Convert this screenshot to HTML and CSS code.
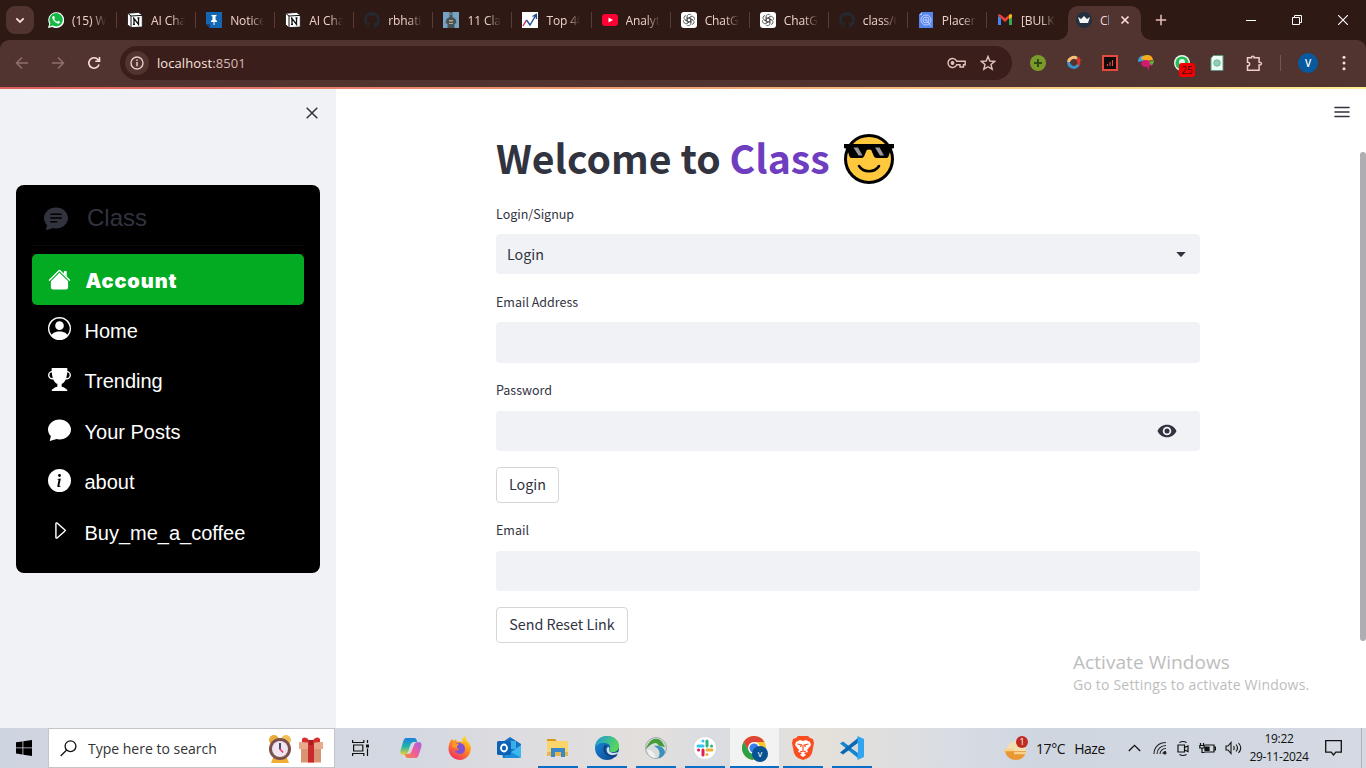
FILE: index.html
```html
<!DOCTYPE html>
<html lang="en">
<head>
<meta charset="utf-8">
<title>Class</title>
<link rel="stylesheet" href="styles.css">
</head>
<body>
<svg class="defs" width="0" height="0" aria-hidden="true">
  <defs>
    <symbol id="notion" viewBox="0 0 16 16"><path d="M.5 1.3 11.5.4l3.8 2.6v12l-11.500.6L.5 12.500z" fill="#fff" stroke="#111" stroke-width=".8"/><path d="M1 1.500 4 4l11-.6M4 4v11.300" fill="none" stroke="#111"/><path d="M7 12.300V6.500l4.500 5.800V6M6 6.500h1.500M6 12.400h2M10.500 6h2" fill="none" stroke="#111" stroke-width="1.300"/></symbol>
    <symbol id="github" viewBox="0 0 16 16"><path fill="#24292f" d="M8 0C3.580 0 0 3.580 0 8c0 3.540 2.290 6.530 5.470 7.590.4.070.55-.17.55-.38 0-.19-.01-.82-.01-1.490-2.010.37-2.530-.49-2.690-.94-.09-.23-.48-.94-.82-1.130-.28-.15-.68-.52-.01-.53.63-.01 1.080.58 1.230.82.72 1.210 1.870.87 2.330.66.07-.52.28-.87.51-1.070-1.780-.2-3.640-.89-3.640-3.950 0-.87.31-1.590.82-2.150-.08-.2-.36-1.020.08-2.120 0 0 .67-.21 2.200.82.64-.18 1.320-.27 2-.27s1.360.09 2 .27c1.530-1.040 2.200-.82 2.200-.82.44 1.100.16 1.920.08 2.120.51.56.82 1.270.82 2.150 0 3.070-1.870 3.750-3.650 3.950.29.25.54.73.54 1.480 0 1.070-.01 1.930-.01 2.200 0 .21.15.46.55.38A8.010 8.010 0 0 0 16 8c0-4.420-3.580-8-8-8z"/></symbol>
    <symbol id="gpt" viewBox="0 0 16 16"><rect width="16" height="16" rx="3" fill="#fff"/><g fill="none" stroke="#444" stroke-width=".75"><path id="petal" d="M6.200 9V4.600A2.300 2.300 0 0 1 10.400 3.300M6.200 6.800 9.900 4.700"/><use href="#petal" transform="rotate(60 8 8)"/><use href="#petal" transform="rotate(120 8 8)"/><use href="#petal" transform="rotate(180 8 8)"/><use href="#petal" transform="rotate(240 8 8)"/><use href="#petal" transform="rotate(300 8 8)"/></g></symbol>
    <linearGradient id="fox" x1=".8" y1="0" x2=".2" y2="1"><stop offset="0" stop-color="#ffe226"/><stop offset=".45" stop-color="#ff8a1e"/><stop offset="1" stop-color="#f0246e"/></linearGradient>
    <linearGradient id="cop1" x1="0" y1="0" x2="0" y2="1"><stop offset="0" stop-color="#1d7fe0"/><stop offset=".5" stop-color="#22b6a8"/><stop offset="1" stop-color="#f3d234"/></linearGradient>
    <linearGradient id="cop2" x1="1" y1="0" x2="0" y2="1"><stop offset="0" stop-color="#a464e8"/><stop offset=".5" stop-color="#ef5a9d"/><stop offset="1" stop-color="#f58a3c"/></linearGradient>
    <linearGradient id="edge1" x1="0" y1="0" x2="1" y2=".4"><stop offset="0" stop-color="#1899dd"/><stop offset="1" stop-color="#56d75b"/></linearGradient>
    <linearGradient id="edge2" x1="0" y1="0" x2="1" y2="1"><stop offset="0" stop-color="#188fe0"/><stop offset="1" stop-color="#0c3f86"/></linearGradient>
  </defs>
</svg>

<div class="screen">
  <header class="browser">
    <div class="tabstrip">
      <div class="tab-search"><svg width="28" height="28" viewBox="0 0 28 28"><path d="m10.300 12.300 3.700 3.700 3.700-3.700" fill="none" stroke="#fbdcd8" stroke-width="1.800"/></svg></div>
      <div class="tab"><svg width="16" height="16" viewBox="0 0 16 16"><path d="m0 16 1.200-4.200A8 7.900 0 1 1 4.200 14.900z" fill="#fff"/><path d="m1.500 14.500.9-3.200A6.700 6.700 0 1 1 4.800 13.600z" fill="#13b845"/><path d="M5.200 4c-2 1.200-.4 4 1.500 5.800 2 1.900 4.400 2.600 5.200.8.300-.9 0-1.100-1.700-1.900l-1 1C7.700 9 6.700 8 6.200 6.900l.7-.9-.8-1.900z" fill="#fff"/></svg><span>(15) Wh</span></div>
      <div class="tab"><svg width="16" height="16"><use href="#notion"/></svg><span>AI Chat</span></div>
      <div class="tab"><svg width="16" height="16" viewBox="0 0 16 16"><path d="M0 0h16v16H4l-4-4z" fill="#1467b3"/><path d="M0 12h4v4z" fill="#17407d"/><path d="M5.500 3h5v1l-1 .6v3L11 9v1H8.500v3h-1v-3H5V9l1.500-1.400v-3l-1-.6z" fill="#fff"/></svg><span>Notice</span></div>
      <div class="tab"><svg width="16" height="16"><use href="#notion"/></svg><span>AI Chat</span></div>
      <div class="tab"><svg width="16" height="16"><use href="#github"/></svg><span>rbhatia</span></div>
      <div class="tab"><svg width="16" height="16" viewBox="0 0 16 16"><path fill="#76a4c7" d="M0 0h16v16H0z"/><path d="M6.500 0h3v5l3 2 1 4-2 1v4h-7v-4l-2-1 1-4 3-2z" fill="#4a5353"/><path d="M7 1.500h2v1H7zM6 8h4v1.500H6zM6 11h4v1H6z" fill="#b0a798"/></svg><span>11 Clas</span></div>
      <div class="tab"><svg width="16" height="16" viewBox="0 0 16 16"><path fill="#fff" d="M0 0h16v16H0z"/><path d="m1 14 3.500-6" stroke="#c62846" stroke-width="1.400"/><path d="m4.500 8 3.500 5 6-10M10.500 4.500 14.300 2.500l.2 4.500" stroke="#234b98" stroke-width="1.400" fill="none"/></svg><span>Top 40</span></div>
      <div class="tab"><svg width="16" height="16" viewBox="0 0 16 16"><rect y="2" width="16" height="12" rx="3" fill="#ff0033"/><path d="m6.500 5.500 4.500 2.500-4.500 2.500z" fill="#fff"/></svg><span>Analyti</span></div>
      <div class="tab"><svg width="16" height="16"><use href="#gpt"/></svg><span>ChatG</span></div>
      <div class="tab"><svg width="16" height="16"><use href="#gpt"/></svg><span>ChatG</span></div>
      <div class="tab"><svg width="16" height="16"><use href="#github"/></svg><span>class/C</span></div>
      <div class="tab"><svg width="16" height="16" viewBox="0 0 16 16"><path d="M4 0h11v16H1V3z" fill="#5685f0"/><path d="m1 3 3-3v3z" fill="#a9c3fb"/><g fill="none" stroke="#c8d7fd" stroke-width=".9"><circle cx="8" cy="8" r="5"/><circle cx="8" cy="8" r="3"/><circle cx="8" cy="8" r="1"/><path d="m9 9 4 5"/></g></svg><span>Placem</span></div>
      <div class="tab tab-before-active"><svg width="16" height="16" viewBox="0 0 16 16"><path d="M1 13V4l3 2v7z" fill="#4285f4"/><path d="M12 13V6l3-2v9z" fill="#34a853"/><path d="M1 3.500C1 2 3 2 4 3l4 3.200L12 3c1-1 3-1 3 .5L8 10z" fill="#ea4335"/><path d="M12 3c1-1 3-1 3 .8V5l-3 2.300z" fill="#fbbc04"/></svg><span>[BULK]</span></div>
      <div class="tab-active"><svg width="16" height="16" viewBox="0 0 16 16"><circle cx="8" cy="8" r="8" fill="#262f3d"/><path d="m2 5 3 2 3-3 3 3 3-2-2 6H4z" fill="#f3f5f5"/></svg><span>Cl</span><svg class="tab-close" width="10" height="10" viewBox="0 0 10 10"><path d="m1.500 1.500 7 7m0-7-7 7" stroke="#fbdcd8" stroke-width="1.700"/></svg></div>
      <svg class="new-tab" width="12" height="12" viewBox="0 0 12 12"><path d="M6 .8v10.400M.8 6h10.400" stroke="#e9bfba" stroke-width="1.500"/></svg>
      <div class="window-controls">
        <svg width="10" height="10" viewBox="0 0 10 10"><path d="M0 5.500h10" stroke="#fff"/></svg>
        <svg width="10" height="10" viewBox="0 0 10 10" fill="none" stroke="#fff"><path d="M.5 2.500h7v7h-7zM2.500 2.500v-2h7v7h-2"/></svg>
        <svg width="10" height="10" viewBox="0 0 10 10"><path d="m0 0 10 10M10 0 0 10" stroke="#fff" stroke-width="1.100"/></svg>
      </div>
    </div>
    <div class="toolbar">
      <div class="nav-buttons">
        <svg width="14" height="14" viewBox="0 0 14 14" fill="none" stroke="#8f706d" stroke-width="1.500"><path d="M13 7H1.500M7 1.500 1.500 7 7 12.500"/></svg>
        <svg width="14" height="14" viewBox="0 0 14 14" fill="none" stroke="#8f706d" stroke-width="1.500"><path d="M1 7h11.500M7 1.500 12.500 7 7 12.500"/></svg>
        <svg width="14" height="14" viewBox="0 0 14 14" fill="none" stroke="#fbdcd8" stroke-width="1.600"><path d="M12 8.500A5.200 5.200 0 1 1 11 3.600L12.300 5M12.500 1v4.300H8.300"/></svg>
      </div>
      <div class="address">
        <div class="site-info"><svg width="14" height="14" viewBox="0 0 14 14"><circle cx="7" cy="7" r="6" fill="none" stroke="#e9cbc7" stroke-width="1.400"/><path d="M7 6v4.200M7 3.600v1.500" stroke="#e9cbc7" stroke-width="1.500"/></svg></div>
        <span class="url">localhost<i>:8501</i></span>
        <svg class="key" width="19" height="12" viewBox="0 0 19 12" fill="none" stroke="#e3c2be" stroke-width="1.400"><path d="M9.700 4.300A4.500 4.500 0 1 0 9.700 7.700H13V10h3.500V7.700h1.700V4.300z"/><circle cx="5.500" cy="6" r="1.200" fill="#e3c2be"/></svg>
        <svg class="star" width="16" height="16" viewBox="0 0 16 16"><path d="m8 1.500 1.800 4.500 4.900.4-3.700 3.100 1.200 4.700L8 11.700l-4.200 2.500L5 9.500 1.300 6.400 6.200 6z" fill="none" stroke="#e3c2be" stroke-width="1.400"/></svg>
      </div>
      <div class="extensions">
        <svg width="16" height="16" viewBox="0 0 16 16"><circle cx="8" cy="8" r="8" fill="#7a9b29"/><path d="M8 4v8M4 8h8" stroke="#2f4a15" stroke-width="2"/></svg>
        <svg width="16" height="16" viewBox="0 0 16 16" fill="none" stroke-width="3"><path d="M2.500 7A5.300 5.300 0 0 1 11 3.500" stroke="#f6c177"/><path d="M11 3.500A5.300 5.300 0 0 1 12 10.500" stroke="#d9392b"/><path d="M12.200 10A5.300 5.300 0 0 1 2.500 7" stroke="#3c92c6"/><path d="M13.500 2.500v3M15 4v2" stroke="#d9392b" stroke-width=".8"/></svg>
        <svg width="16" height="16" viewBox="0 0 16 16"><path d="M0 0h16v16H0z" fill="#e64a3c"/><path d="M2 2h12v12H2z" fill="#110b0b"/><path d="M5.500 11V9M8 11V7m2.500 4V5" stroke="#e64a3c" stroke-width="1.100"/></svg>
        <svg width="16" height="17" viewBox="0 0 16 17"><path d="M0 7c0-5 3-7 6-6 2 .3 2 4-1 5z" fill="#3f9fdb"/><path d="M3 4C4 0 8 0 10 0c3 0 5 3 5 5L9 6z" fill="#f7ab1c"/><path d="M3 7.500c2-2 5-3 7-2l5 2c0 2-2 4-4 3.500V16l-2-4c-4 0-6-1.500-6-4.500z" fill="#d1196f"/><path d="m11 7 5-2c0 3-1 5-3 5z" fill="#5dae3d"/></svg>
        <div class="badged"><svg width="16" height="16" viewBox="0 0 16 16"><circle cx="8" cy="8" r="8" fill="#edf9ee"/><circle cx="8" cy="8" r="6.600" fill="#25bd58"/><circle cx="8" cy="7" r="3" fill="#eaf6ea"/></svg><b>25</b></div>
        <svg width="14" height="16" viewBox="0 0 14 16"><path d="M3.500.5h9.500v15H1V3z" fill="#e9fff4" stroke="#5e9680"/><circle cx="7" cy="8" r="3.300" fill="#91cdb7" stroke="#5fa58d" stroke-width=".7"/></svg>
        <svg class="puzzle" width="17" height="17" viewBox="0 0 17 17"><path d="M1.500 2.700h4c-.4-2 3-2 2.600 0h5v4.500c3-.5 3 3.300 0 2.800v5.300H1.500v-4.500c2.900 0 2.900-3.600 0-3.600z" fill="none" stroke="#f0cdc8" stroke-width="1.500"/></svg>
        <span class="divider"></span>
        <span class="avatar">V</span>
        <svg class="more" width="4" height="16" viewBox="0 0 4 16" fill="#fbdcd8"><circle cx="2" cy="2.200" r="1.500"/><circle cx="2" cy="8" r="1.500"/><circle cx="2" cy="13.800" r="1.500"/></svg>
      </div>
    </div>
  </header>

  <div class="app">
    <aside class="sidebar">
      <svg class="sidebar-close" width="12" height="12" viewBox="0 0 12 12"><path d="m.7.700 10.600 10.600M11.300.700.7 11.300" stroke="#31333f" stroke-width="1.500"/></svg>
      <nav class="menu">
        <div class="menu-title"><svg width="24" height="24" viewBox="0 0 16 16"><path d="M16 8c0 3.866-3.582 7-8 7a9.060 9.060 0 0 1-2.347-.306c-.584.296-1.925.864-4.181 1.234-.2.032-.352-.176-.273-.362.354-.836.674-1.950.770-2.966C.744 11.370 0 9.760 0 8c0-3.866 3.582-7 8-7s8 3.134 8 7zM4.500 5a.5.5 0 0 0 0 1h7a.5.5 0 0 0 0-1h-7zm0 2.500a.5.5 0 0 0 0 1h7a.5.5 0 0 0 0-1h-7zm0 2.500a.5.5 0 0 0 0 1h4a.5.5 0 0 0 0-1h-4z"/></svg><span>Class</span></div>
        <a class="item selected"><svg viewBox="0 0 16 16"><path d="m8 3.293 6 6V13.500a1.500 1.500 0 0 1-1.500 1.500h-9A1.500 1.500 0 0 1 2 13.500V9.293l6-6zm5-.793V6l-2-2V2.500a.5.5 0 0 1 .5-.5h1a.5.5 0 0 1 .5.5z"/><path d="M7.293 1.500a1 1 0 0 1 1.414 0l6.647 6.646a.5.5 0 0 1-.708.708L8 2.207 1.354 8.854a.5.5 0 1 1-.708-.708L7.293 1.500z"/></svg><span>Account</span></a>
        <a class="item"><svg viewBox="0 0 16 16"><path d="M11 6a3 3 0 1 1-6 0 3 3 0 0 1 6 0z"/><path fill-rule="evenodd" d="M0 8a8 8 0 1 1 16 0A8 8 0 0 1 0 8zm8-7a7 7 0 0 0-5.468 11.370C3.242 11.226 4.805 10 8 10s4.757 1.225 5.468 2.370A7 7 0 0 0 8 1z"/></svg><span>Home</span></a>
        <a class="item"><svg viewBox="0 0 16 16"><path d="M2.500.5A.5.5 0 0 1 3 0h10a.5.5 0 0 1 .5.5c0 .538-.012 1.050-.034 1.536a3 3 0 1 1-1.133 5.890c-.79 1.865-1.878 2.777-2.833 3.011v2.173l1.425.356c.194.048.377.135.537.255L13.300 15.100a.5.5 0 0 1-.3.900H3a.5.5 0 0 1-.3-.9l1.838-1.379c.16-.12.343-.207.537-.255L6.500 13.110v-2.173c-.955-.234-2.043-1.146-2.833-3.012a3 3 0 1 1-1.132-5.890A33.076 33.076 0 0 1 2.500.5zm.099 2.540a2 2 0 0 0 .72 3.935c-.333-1.050-.588-2.346-.72-3.935zm10.083 3.935a2 2 0 0 0 .72-3.935c-.133 1.590-.388 2.885-.72 3.935z"/></svg><span>Trending</span></a>
        <a class="item"><svg viewBox="0 0 16 16"><path d="M8 15c4.418 0 8-3.134 8-7s-3.582-7-8-7-8 3.134-8 7c0 1.760.743 3.370 1.970 4.600-.097 1.016-.417 2.130-.771 2.966-.079.186.074.394.273.362 2.256-.37 3.597-.938 4.180-1.234A9.060 9.060 0 0 0 8 15z"/></svg><span>Your Posts</span></a>
        <a class="item"><svg viewBox="0 0 16 16"><path d="M8 16A8 8 0 1 0 8 0a8 8 0 0 0 0 16zm.93-9.412-1 4.705c-.07.34.029.533.304.533.194 0 .487-.07.686-.246l-.088.416c-.287.346-.92.598-1.465.598-.703 0-1.002-.422-.808-1.319l.738-3.468c.064-.293.006-.399-.287-.47l-.451-.081.082-.381 2.290-.287zM8 5.500a1 1 0 1 1 0-2 1 1 0 0 1 0 2z"/></svg><span>about</span></a>
        <a class="item"><svg viewBox="0 0 16 16"><path d="M6 12.796V3.204L11.481 8 6 12.796zm.659.753 5.480-4.796a1 1 0 0 0 0-1.506L6.660 2.451C6.011 1.885 5 2.345 5 3.204v9.592a1 1 0 0 0 1.659.753z"/></svg><span>Buy_me_a_coffee</span></a>
      </nav>
    </aside>
    <main class="main">
      <div class="form">
        <h1><span>Welcome to <em>Class</em></span>
          <svg width="52" height="52" viewBox="0 0 52 52"><circle cx="26" cy="26" r="23.500" fill="#ffc83d" stroke="#000" stroke-width="3"/><path d="M1 11h50v4l-3 1-2.500 7.500Q45 25 43 25h-9q-2 0-3-1.500L28.200 17q-2.200-1-4.400 0L21 23.500Q20 25 18 25H9q-2 0-2.500-1.500L4 16l-3-1z"/><path d="m10.500 14.500 5 8h4l-4.500-8zM32 14.500l5 8h4l-4.500-8z" fill="#999"/><path d="M16 33c4.500 7 15.500 7 20 0" fill="none" stroke="#000" stroke-width="2.600" stroke-linecap="round"/></svg>
        </h1>
        <div class="field"><label>Login/Signup</label><div class="control select"><span>Login</span><svg width="10" height="5" viewBox="0 0 10 5"><path d="M.3 0h9.400L5.600 4.500q-.6.500-1.200 0z" fill="#31333f"/></svg></div></div>
        <div class="field snug"><label>Email Address</label><div class="control tall"></div></div>
        <div class="field roomy"><label>Password</label><div class="control password"><svg width="20" height="14" viewBox="0 0 20 14"><path fill-rule="evenodd" d="M10 .7C5.600.7 2 3.300.5 7c1.500 3.700 5.100 6.300 9.500 6.300s8-2.600 9.500-6.300C18 3.300 14.400.7 10 .7zm0 2a4.300 4.300 0 1 1 0 8.600 4.300 4.300 0 0 1 0-8.600z" fill="#31333f"/><circle cx="10" cy="7" r="2.500" fill="#31333f"/></svg></div></div>
        <button class="btn-login">Login</button>
        <div class="field roomy"><label>Email</label><div class="control"></div></div>
        <button class="btn-reset">Send Reset Link</button>
      </div>
      <svg class="hamburger" width="16" height="12" viewBox="0 0 16 12"><path d="M1 1.500h14M1 6h14M1 10.500h14" stroke="#31333f" stroke-width="1.600" stroke-linecap="round"/></svg>
      <div class="scroll-thumb"></div>
      <div class="watermark"><p>Activate Windows</p><small>Go to Settings to activate Windows.</small></div>
    </main>
  </div>

  <footer class="taskbar">
    <div class="start"><svg width="16" height="16" viewBox="0 0 16 16"><path d="m0 2.300 6.500-.9v6.100H0zM7.300 1.300 16 0v7.500H7.300zM0 8.300h6.500v6.200L0 13.600zM7.300 8.300H16V16l-8.700-1.300z"/></svg></div>
    <div class="search">
      <svg width="17" height="17" viewBox="0 0 17 17" fill="none" stroke="#111" stroke-width="1.300"><circle cx="10.500" cy="6.200" r="5.400"/><path d="M6.600 10 .7 16"/></svg>
      <span>Type here to search</span>
      <svg class="clock" width="24" height="29" viewBox="0 0 24 29"><circle cx="6" cy="5" r="5" fill="#e9ab3b"/><circle cx="18" cy="5" r="5" fill="#f2c05a"/><path d="m5 23-2 5h18l-2-5z" fill="#f0ae34"/><circle cx="12" cy="14" r="11" fill="#7d504c"/><circle cx="12" cy="14" r="8" fill="#efe6f2"/><path d="M12 8v6.500" stroke="#1f2650" stroke-width="1.600"/><path d="m12 14 3 3.500" stroke="#f13866" stroke-width="1.600"/></svg>
      <svg class="gift" width="24" height="26" viewBox="0 0 24 26"><path d="M2 9h20v16.500H2z" fill="#d99474"/><path d="M0 5h24v7H0z" fill="#e8aa8a"/><path d="M9 5h6v20.500H9z" fill="#c92a2c"/><path d="M12 6C8-1 2-1 3 5zM12 6c4-7 10-7 9-1z" fill="#d6302e"/><path d="M10 3h4v5h-4z" fill="#a71d20"/></svg>
    </div>
    <div class="task-view"><svg width="17" height="16" viewBox="0 0 17 16" fill="none" stroke="#111" stroke-width="1.200"><path d="M.6 0v2.500h11.200V0M.6 16v-2.500h11.200V16M1.600 5h9.200v6H1.600zM15.500 0v3M15.500 8.500V16"/><path d="M14 4.500h3v3h-3z" fill="#111" stroke="none"/></svg></div>
    <div class="apps">
      <div class="task"><svg width="24" height="24" viewBox="0 0 24 24"><path d="M7 2h8c2 0 3 2 3 4h-3c-2 0-3 1-4 4l-2 6c-.7 2-2 3-4 3-4 0-4-3-3-6l2-7c.7-2 1.500-4 3-4z" fill="url(#cop1)"/><path d="M17 22H9c-2 0-3-2-3-4h3c2 0 3-1 4-4l2-5c.7-2 2-3 4-3 4 0 4 3 3 6l-2 6c-.7 2-1.500 4-3 4z" fill="url(#cop2)"/></svg></div>
      <div class="task"><svg width="24" height="24" viewBox="0 0 24 24"><path d="M6 5 8 3l1 3c2-1 4-1 6 0l-1-3 3-3 2 5c3 2 4 5 4 8-1 7-6 11-11 11S1 20 .5 13.500C.4 9 2 5 4 3z" fill="url(#fox)"/><path d="M8 7c5-1 9 1 9 6 0 4-3 5-5 5-3 0-5-2-5-4 2 1 4 0 4-1-1-1-2-1-4-1-1-2 0-4 1-5z" fill="#8252d5"/><path d="M6 6c1 2 3 1 5 2l-2 2v2c-3 0-5-1-5-3z" fill="#ff9a20"/></svg></div>
      <div class="task"><svg width="24" height="24" viewBox="0 0 24 24"><path d="m3 8 10-7 11 7v12q0 2-2 2H6z" fill="#1672c3"/><path d="M7 5h12v8H7z" fill="#38aee9"/><path d="m7 21 17-12v11q0 2-2 2z" fill="#3bb8ee"/><path d="m8 13 15 8q-1 1-2 1H8z" fill="#1d90dc"/><rect y="5" width="14" height="14" rx="1.500" fill="#0c63b5"/><ellipse cx="7" cy="12" rx="3" ry="3.500" fill="none" stroke="#fff" stroke-width="1.800"/></svg></div>
      <div class="task running"><svg width="24" height="24" viewBox="0 0 24 24"><path d="M1 3h8l2 2H1z" fill="#d69a19"/><path d="M1 5h21v15H1z" fill="#f9d56c"/><path d="M1 16h21v4H1z" fill="#e8b74b"/><path d="M5 12h14v9h-4v-5H9v5H5z" fill="#3a88c8"/></svg></div>
      <div class="task running"><svg width="24" height="24" viewBox="0 0 24 24"><circle cx="12" cy="12" r="12" fill="url(#edge2)"/><path d="M.2 10C1 4 6 0 12 0c8 0 12 5 12 10 0 4-3 6-6 6-4 0-4-1-3-3 1-4-2-6-6-6C4 7 1 9 .2 12z" fill="url(#edge1)"/><path d="M10 9c-3 3-2 10 6 12 3 .5 5 0 6.500-2-5 2-12 0-12-6 0-2 1-3 2-4z" fill="#123f83"/><path d="M14 14c0 2 2 3 5 3l5-1c-1 2-4 3-7 3-4 0-6-4-5-7l2-1q1 1 0 3z" fill="#dbe5eb"/></svg></div>
      <div class="task running"><svg width="24" height="24" viewBox="0 0 24 24"><circle cx="12" cy="12" r="10.500" fill="#d8dbd9" stroke="#9eabae"/><path d="M2 13C4 7 8 2 13 3c5 .5 6 5 8 8l-6-1c-2-5-7-4-13 3z" fill="#429d37"/><path d="M10 10c5-1 10 1 11 6-1 4-4 6-7 6 3-4 2-9-4-12z" fill="#3b91be"/><path d="M3 14c4-1 7 2 9 8-5 0-8-3-9-8z" fill="#eef1f0"/></svg></div>
      <div class="task running"><svg width="24" height="24" viewBox="0 0 24 24"><circle cx="12" cy="12" r="11.500" fill="#fff" stroke="#c8c9cb" stroke-width=".6"/><g stroke-width="3" stroke-linecap="round"><path d="M10 5v.1M5 10h5" stroke="#36c5f0"/><path d="M14 5v5M18.500 10h.1" stroke="#2eb67d"/><path d="M14 14h5M14 18.500v.1" stroke="#ecb22e"/><path d="M10 14v5M5.500 14h.1" stroke="#e01e5a"/></g></svg></div>
      <div class="task running current"><svg width="26" height="26" viewBox="0 0 26 26"><circle cx="12" cy="12" r="12" fill="#f9c62e"/><path d="M1.600 6A12 12 0 0 1 22.400 6H12l-5 9z" fill="#df4438"/><path d="M1.600 6A12 12 0 0 0 11 24l5-9H7z" fill="#2ca14c"/><circle cx="12" cy="12" r="6" fill="#fff"/><circle cx="12" cy="12" r="4.600" fill="#397eed"/><circle cx="18" cy="18" r="8" fill="#075293"/><text x="18" y="21" text-anchor="middle" class="profile">v</text></svg></div>
      <div class="task running"><svg width="22" height="24" viewBox="0 0 22 24"><path d="M6 0h10l2 2 3 1 1 4-2 10q-1 3-4 5l-5 2-5-2q-3-2-4-5L0 7l1-4 3-1z" fill="#fb4e20"/><path d="m4 6 4-2 3 1 3-1 4 2 1 3-4 5 1 2-4 1 2 2-3 2-3-2 2-2-4-1 1-2-4-5z" fill="#fff"/><path d="m5.500 8 4 1-1 2M16.500 8l-4 1 1 2M11 9v5m-3 2 3-1 3 1" fill="none" stroke="#fb4e20" stroke-width="1.200"/></svg></div>
      <div class="task running"><svg width="24" height="24" viewBox="0 0 24 24"><path d="m0 7.500 3-2L18.500 17v5.500z" fill="#1684cf"/><path d="m0 16.500 3 2L18.500 7V1.500z" fill="#0b69b4"/><path d="m17.500 0 6.500 3v18l-6.500 3z" fill="#31a6ef"/><path d="M18 7v10l-7-5z" fill="#d8d9dc"/></svg></div>
    </div>
    <div class="weather"><svg width="26" height="25" viewBox="0 0 26 25"><path d="M3 15C3 8 9 4 14 5l8 8-2 3z" fill="#f4dfb0"/><path d="M1 15h21c-1 6-5 9-10 9S2 21 1 15z" fill="#ea9734"/><path d="M0 14h10M10 17h12" stroke="#f7d089" stroke-width="2.500"/><circle cx="18" cy="6" r="6" fill="#bf2b23"/><text x="18" y="9" text-anchor="middle" class="count">1</text></svg><span class="temp">17°C</span><span class="sky">Haze</span></div>
    <div class="tray">
      <svg width="13" height="8" viewBox="0 0 13 8"><path d="m.8 7 5.700-5.700L12.200 7" fill="none" stroke="#111" stroke-width="1.300"/></svg>
      <svg class="wifi" width="14" height="14" viewBox="0 0 14 14" fill="none" stroke="#222" stroke-width="1.100"><path d="M1 13C1 6 6 1.500 13 1.500M4 13c0-5 4-8.500 9-8.500M7 13c0-3 2.500-5.500 6-5.500M10 13c0-1.500 1-2.500 3-2.500"/><circle cx="12" cy="12" r="1" fill="#111"/></svg>
      <svg width="12" height="17" viewBox="0 0 12 17" fill="none" stroke="#111" stroke-width="1.200"><path d="M1 5h6.500v7H1zM7.500 7.500 11 6v5.500L7.500 10M2.500 2.500q3.500-2 7 0M2.500 14.500q3.500 2 7 0"/></svg>
      <svg width="17" height="12" viewBox="0 0 17 12" fill="none" stroke="#111" stroke-width="1.200"><path d="M5.500 3H15v7H5.500M15.500 5h1v3h-1M1.500 1v2.500M4.500 1v2.500M.8 3.500h4.400V6H.8zM3 6v4.500h2.500"/><path d="M6 5h4v3.500H6z" fill="#111"/></svg>
      <svg width="17" height="14" viewBox="0 0 17 14" fill="none" stroke="#111" stroke-width="1.100"><path d="M1 5h2l3-3.500v11L3 9H1zM8.500 5q1.500 2 0 4M11 3.500q3 3.500 0 7M13.500 2q4.500 5 0 10"/></svg>
    </div>
    <div class="datetime"><span>19:22</span><span>29-11-2024</span></div>
    <svg class="notifications" width="17" height="16" viewBox="0 0 17 16"><path d="M.7.700h15.600v11.500h-5.500L8.500 15l-2.300-2.800H.7z" fill="none" stroke="#111" stroke-width="1.300"/></svg>
    <span class="peek"></span>
  </footer>
</div>
</body>
</html>
```

FILE: styles.css
```css
* { box-sizing: border-box; }
body { margin: 0; overflow: hidden; font-family: "Open Sans", "Noto Sans", sans-serif; }
svg { flex: none; display: block; }
.defs { position: absolute; }
.screen { width: 1366px; height: 768px; display: flex; flex-direction: column; overflow: hidden; }

/* browser chrome */
.browser { height: 87px; flex: none; background: #2f1915; }
.tabstrip { height: 40px; display: flex; align-items: center; }
.tab-search { width: 28px; height: 28px; margin: 0 4px 0 6px; border-radius: 9px; background: #513330; }
.tab { width: 79.08px; height: 16px; display: flex; align-items: center; gap: 8px; padding-left: 10px; border-right: 1px solid #5d3b36; flex: none; }
.tab span { width: 34px; padding-top: 2px; overflow: hidden; white-space: nowrap; font-size: 12px; letter-spacing: -.1px; line-height: 18px; color: #efd0cb; -webkit-mask-image: linear-gradient(90deg, #000 60%, transparent); mask-image: linear-gradient(90deg, #000 60%, transparent); }
.tab-before-active { border-color: transparent; width: 77px; }
.tab-active { position: relative; width: 73px; height: 34px; align-self: flex-end; margin-left: 4px; flex: none; background: #513330; border-radius: 10px 10px 0 0; display: flex; align-items: center; padding: 0 0 6px 8px; color: #f4d7d3; font-size: 12px; }
.tab-active::before, .tab-active::after { content: ""; position: absolute; bottom: 0; width: 10px; height: 10px; }
.tab-active::before { right: 100%; background: radial-gradient(circle at 0 0, transparent 9.5px, #513330 10px); }
.tab-active::after { left: 100%; background: radial-gradient(circle at 100% 0, transparent 9.5px, #513330 10px); }
.tab-active span { width: 9px; margin-left: 8px; overflow: hidden; }
.tab-close { margin-left: 11px; }
.new-tab { margin-left: 14px; }
.window-controls { display: flex; gap: 36px; margin-left: 79px; }
.toolbar { height: 47px; padding-bottom: 1px; background: #513330; border-radius: 9px 9px 0 0; display: flex; align-items: center; }
.nav-buttons { width: 120px; display: flex; gap: 22px; padding-left: 15px; }
.address { width: 892px; height: 34px; border-radius: 17px; background: #391e1b; display: flex; align-items: center; padding-left: 5px; flex: none; }
.site-info { width: 24px; height: 24px; border-radius: 50%; background: #513330; display: grid; place-items: center; }
.url { margin-left: 8px; font-size: 13px; color: #fbe3df; line-height: 20px; letter-spacing: .08px; }
.url i { font-style: normal; color: #d9b8b3; }
.key { margin-left: auto; }
.star { margin: 0 16px 0 14px; }
.extensions { display: flex; align-items: center; padding-left: 18px; gap: 20px; }
.badged { position: relative; }
.badged b { position: absolute; left: 5px; top: 8px; width: 16px; height: 14px; border-radius: 3px; background: #f50000; color: #351010; font: 10px/14px "Open Sans", sans-serif; text-align: center; }
.puzzle { margin: 0 -1px 0 2px; }
.divider { width: 1px; height: 16px; margin-left: -2px; background: #755550; }
.avatar { width: 20px; height: 20px; margin-left: -3px; border-radius: 50%; background: #0759a0; color: #fff; font-size: 10px; font-weight: 600; line-height: 20px; text-align: center; }
.more { margin-left: 4px; }

/* web application */
.app { position: relative; height: 641px; flex: none; display: flex; background: #fff; }
.app::before { content: ""; position: absolute; z-index: 2; top: 0; left: 0; right: 0; height: 2px; background: linear-gradient(90deg, #e05d5d, #ffef93); }
.sidebar { width: 336px; background: #f0f2f6; padding: 20px 16px 0; }
.sidebar-close { margin: 0 2px 66px auto; }
.menu { height: 388px; padding: 16px; background: #000; border-radius: 8px; font-family: "Liberation Sans", Arial, sans-serif; }
.menu-title { height: 45px; padding: 0 0 10px 12px; margin-bottom: 8px; border-bottom: 1px solid #0c0c10; display: flex; align-items: center; gap: 19px; font-size: 24px; color: #31333f; fill: #31333f; }
.item { height: 50.500px; padding: 0 16px; display: flex; align-items: center; gap: 13.500px; color: #fff; fill: #fff; font-size: 20px; border-radius: 5px; }
.item svg { width: 23px; height: 23px; margin-bottom: 3px; }
.item span { padding-top: 2px; }
.item.selected { height: 51px; background: #02ab21; }
.item.selected svg { margin-bottom: 1px; }
.item.selected span { margin-left: 1px; font-family: Inter, sans-serif; font-weight: 900; letter-spacing: .9px; }

.main { position: relative; flex: 1; padding: 44px 0 0 160px; font-family: "Noto Sans CJK SC", sans-serif; color: #31333f; }
.form { width: 704px; display: flex; flex-direction: column; align-items: flex-start; }
h1 { height: 52px; margin: 0 0 21px; display: flex; align-items: center; gap: 14px; font-size: 39.200px; font-weight: 700; line-height: 52px; white-space: nowrap; }
h1 svg { margin-top: 4px; margin-left: -.5px; }
h1 em { font-style: normal; color: #6f3dbf; }
.field { width: 100%; margin-bottom: 18px; }
.field.snug { margin-bottom: 17px; }
.field label { display: block; height: 20px; margin-bottom: 10px; font-size: 12.500px; line-height: 20px; }
.field.roomy label { height: 21px; }
.control { height: 40px; border-radius: 4px; background: #f0f2f6; display: flex; align-items: center; }
.control.tall { height: 41px; }
.select { justify-content: space-between; padding: 0 14px 0 11px; font-size: 14.300px; }
.select span { padding-bottom: 1px; }
.password { justify-content: flex-end; padding-right: 23px; }
button { height: 36px; padding: 0 0 2px; border: 1px solid #d6d6d9; border-radius: 4px; background: #fff; color: #31333f; font: 14.300px/32px "Noto Sans CJK SC", sans-serif; }
.btn-login { width: 63px; margin: -2px 0 17px; }
.btn-reset { width: 132px; margin-top: -2px; }
.hamburger { position: absolute; top: 19px; right: 16px; }
.scroll-thumb { position: absolute; top: 65px; right: 0; width: 6px; height: 489px; border-radius: 3px; background: #adadb2; }
.watermark { position: absolute; left: 737px; top: 561px; color: #bdbdbd; font-family: "Open Sans", sans-serif; white-space: nowrap; }
.watermark p { margin: 0; font-size: 19px; line-height: 28px; letter-spacing: .06px; }
.watermark small { display: block; font-size: 14px; line-height: 17px; letter-spacing: .2px; }

/* desktop taskbar */
.taskbar { height: 40px; flex: none; display: flex; align-items: center; background: linear-gradient(90deg, #cfd5e0 0, #d4d8e1 30%, #dddce0 38%, #e3dfdc 48%, #d9dce2 52%, #e5e1da 60%, #d8dce3 70%, #cfd6e0 76%, #d4d9e2); }
.start { width: 48px; display: grid; place-items: center; }
.search { width: 287px; height: 40px; border: 1px solid #c3c5ca; background: #fff; display: flex; align-items: center; padding-left: 11px; }
.search span { margin-left: 11px; width: 180px; font-size: 14px; color: #333; white-space: nowrap; }
.clock { margin-top: 2px; }
.gift { margin: 4px 0 0 7px; }
.task-view { width: 51px; display: grid; place-items: center; }
.apps { display: flex; margin-left: .5px; }
.task { width: 49px; height: 40px; display: grid; place-items: center; background: linear-gradient(#0b6fc6, #0b6fc6) center bottom / 0 2px no-repeat; }
.running { background-size: 40px 2px; }
.current { background-color: #f2f2f2; background-size: 49px 2px; }
.current svg { margin: 2px 0 0 2px; }
.profile { font: 9px "Open Sans", sans-serif; fill: #fff; }
.count { font: 9px "Open Sans", sans-serif; fill: #fff; }
.weather { display: flex; align-items: center; margin-left: 127.500px; width: 124px; font-size: 14px; color: #111; white-space: nowrap; }
.temp { margin-left: 6px; letter-spacing: -.4px; }
.sky { margin-left: 9px; letter-spacing: -.5px; }
.tray { display: flex; align-items: center; gap: 9.500px; }
.wifi { margin: 0 1px 0 2px; }
.datetime { width: 70px; margin-left: 2px; display: flex; flex-direction: column; align-items: center; font-size: 12px; line-height: 18px; letter-spacing: -.35px; color: #111; white-space: nowrap; }
.notifications { margin-left: 11px; }
.peek { width: 1px; height: 40px; margin: 0 4px 0 auto; background: #aeb4be; }
```
